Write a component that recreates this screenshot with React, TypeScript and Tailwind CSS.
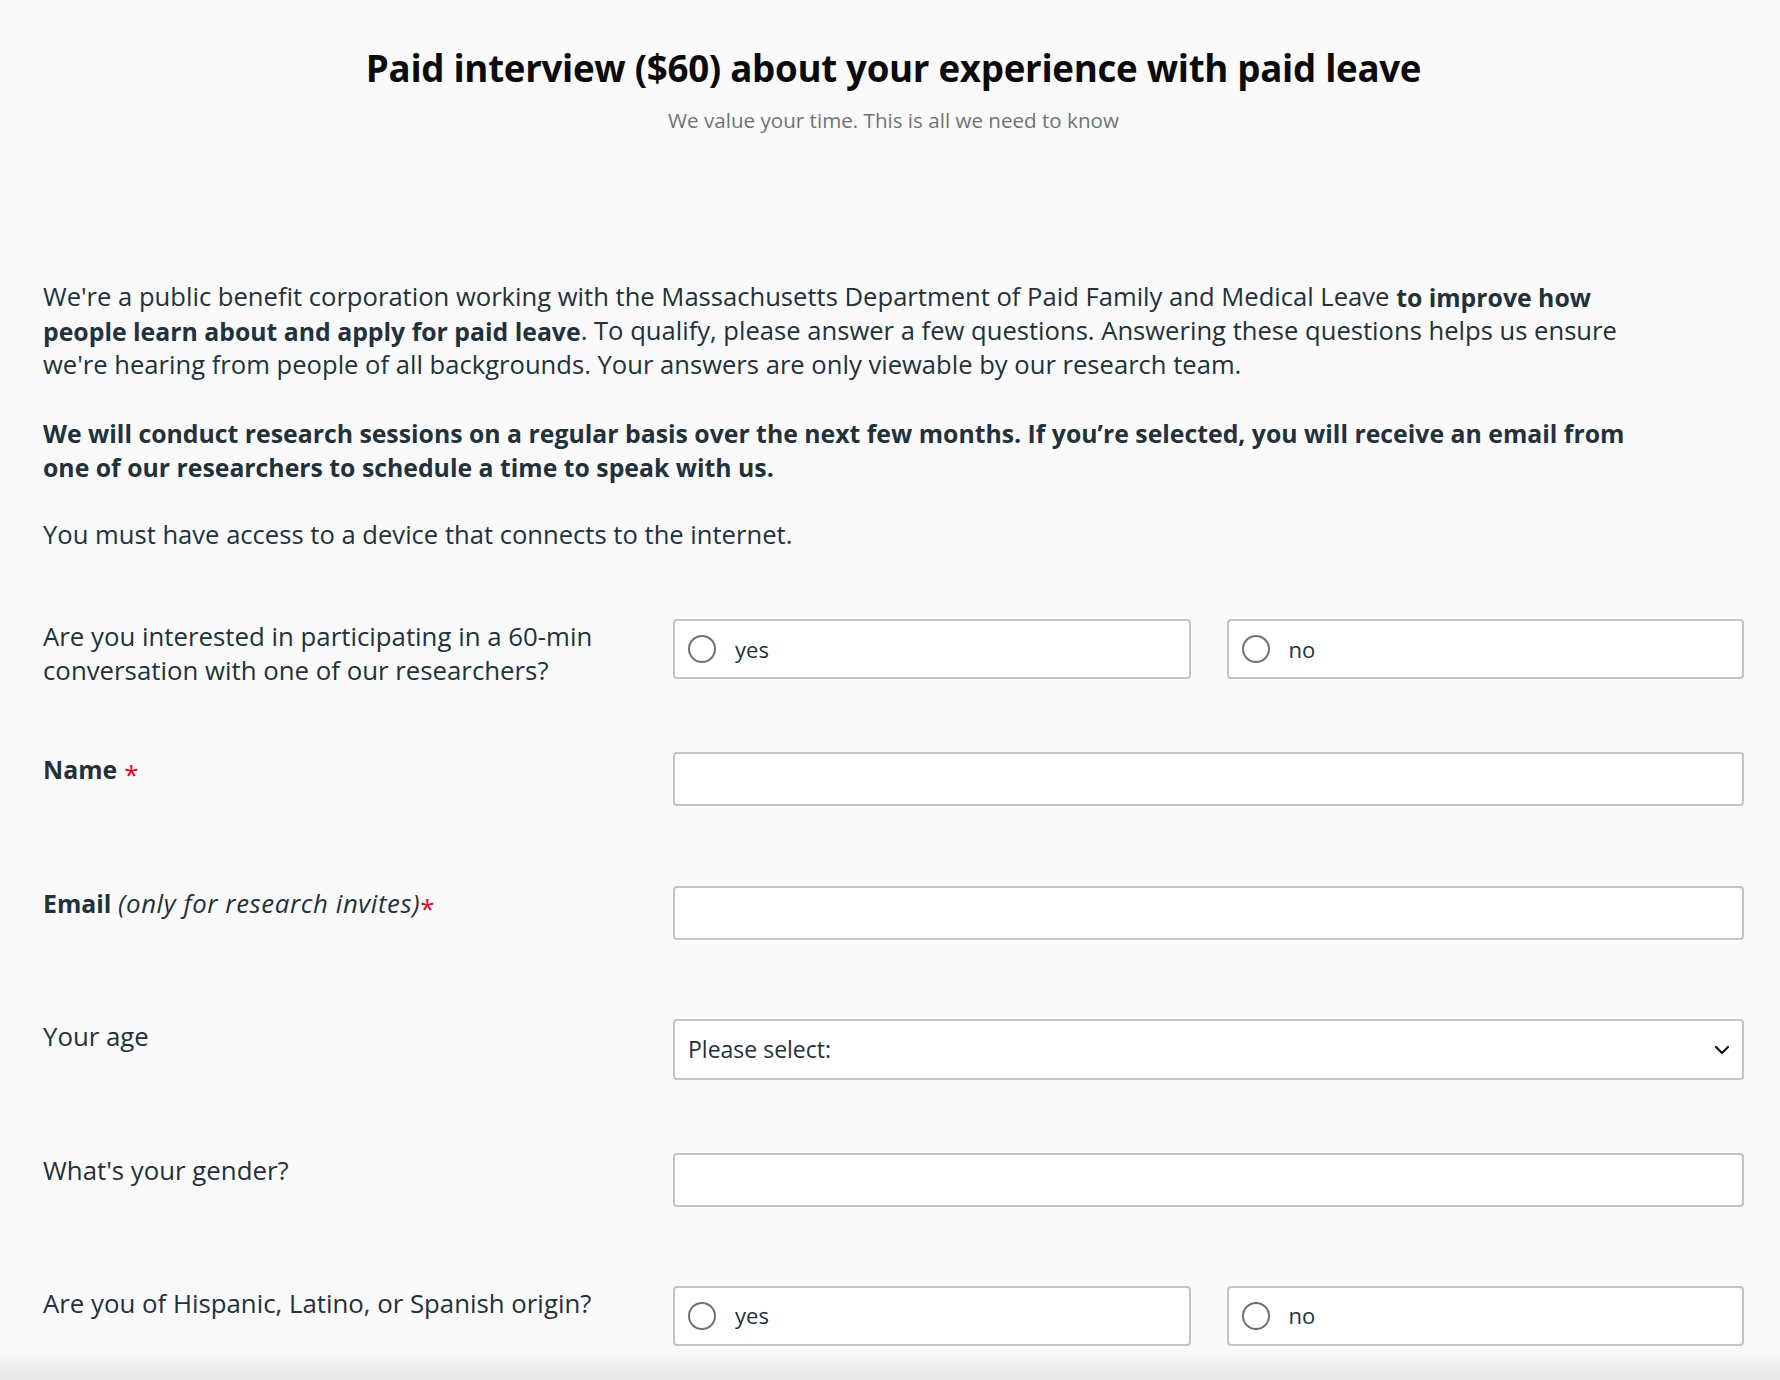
import { ChevronDown } from 'lucide-react';

const font = { fontFamily: '"Open Sans", "Noto Sans", "Liberation Sans", sans-serif' };

function Star() {
  return <span className="relative top-[5px] ml-[7px] text-[26px] font-normal text-[#e4002b]">*</span>;
}

function RadioBox({ label }: { label: string }) {
  return (
    <label className="flex h-[60px] flex-1 cursor-pointer items-center rounded-[4px] border-2 border-[#c4c4c4] bg-white pl-[13px]">
      <span className="h-[28px] w-[28px] shrink-0 rounded-full border-2 border-[#6e7378]" />
      <span className="ml-[19px] text-[22px] text-[#23323a]">{label}</span>
    </label>
  );
}

function TextBox() {
  return <input className="h-[54px] w-full rounded-[4px] border-2 border-[#c4c4c4] bg-white px-[14px] text-[22px] outline-none" />;
}

function Row({ label, children }: { label: React.ReactNode; children: React.ReactNode }) {
  return (
    <div className="flex h-[133.4px] items-start">
      <div className="w-[630px] shrink-0 pr-[36px] text-[25.8px] leading-[34px] text-[#22313a]">{label}</div>
      <div className="flex flex-1 gap-[36px]">{children}</div>
    </div>
  );
}

export default function App() {
  return (
    <div className="relative min-h-[1380px] bg-[#fafafa] pl-[43px] pr-[36px]" style={font}>
      <h1 className="pt-[44px] text-center text-[36.7px] font-bold leading-[48px] tracking-[-0.3px] text-[#0b0b0b]">
        Paid interview ($60) about your experience with paid leave
      </h1>
      <p className="mt-[14px] text-center text-[20.6px] leading-[28px] text-[#6f7375]">
        We value your time. This is all we need to know
      </p>

      <div className="mt-[146px] text-[25.6px] leading-[34px] text-[#22313a]">
        <p>
          We're a public benefit corporation working with the Massachusetts Department of Paid Family and Medical Leave{' '}
          <b className="align-top text-[24.8px]">to improve how</b>
          <br />
          <b className="align-top text-[24.8px]">people learn about and apply for paid leave</b>. To qualify, please answer a few questions. Answering these questions helps us ensure
          <br />
          we're hearing from people of all backgrounds. Your answers are only viewable by our research team.
        </p>
        <p className="mt-[34px] text-[24.8px] font-bold">
          We will conduct research sessions on a regular basis over the next few months. If you’re selected, you will receive an email from
          <br />
          one of our researchers to schedule a time to speak with us.
        </p>
        <p className="mt-[34px]">You must have access to a device that connects to the internet.</p>
      </div>

      <div className="mt-[67px]">
        <Row label="Are you interested in participating in a 60-min conversation with one of our researchers?">
          <RadioBox label="yes" />
          <RadioBox label="no" />
        </Row>
        <Row
          label={
            <span className="align-top text-[24.8px] font-bold">
              Name
              <Star />
            </span>
          }
        >
          <TextBox />
        </Row>
        <Row
          label={
            <span>
              <b className="align-top text-[24.8px]">Email</b> <i className="tracking-[0.6px]">(only for research invites)</i>
              <span className="relative top-[5px] text-[26px] text-[#e4002b]">*</span>
            </span>
          }
        >
          <TextBox />
        </Row>
        <Row label="Your age">
          <div className="flex h-[61px] w-full items-center justify-between rounded-[4px] border-2 border-[#c4c4c4] bg-white pl-[13px] pr-[8px]">
            <span className="text-[23px] text-[#22313a]">Please select:</span>
            <ChevronDown className="h-[24px] w-[24px] text-[#111]" strokeWidth={2.2} />
          </div>
        </Row>
        <Row label="What's your gender?">
          <TextBox />
        </Row>
        <Row label="Are you of Hispanic, Latino, or Spanish origin?">
          <RadioBox label="yes" />
          <RadioBox label="no" />
        </Row>
      </div>

      <div className="pointer-events-none fixed bottom-0 left-0 right-0 h-[30px] bg-gradient-to-t from-[#e6e6e6] to-transparent" />
    </div>
  );
}
